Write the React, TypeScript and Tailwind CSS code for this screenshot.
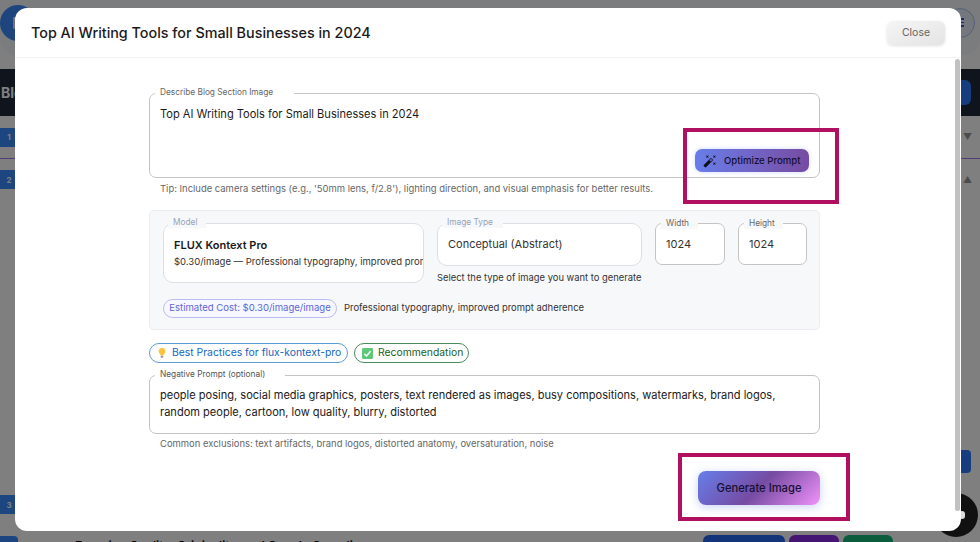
import React from 'react';
import { MdAutoFixHigh } from 'react-icons/md';

const Bulb = () => (
  <svg viewBox="0 0 12 14" className="h-[12px] w-[10px] shrink-0">
    <path d="M6 .8a4.2 4.2 0 0 0-2.4 7.6c.5.4.7.9.8 1.5h3.2c.1-.6.3-1.1.8-1.5A4.2 4.2 0 0 0 6 .8z" fill="#f9c23c" />
    <rect x="4.3" y="10.2" width="3.4" height="2.6" rx="1" fill="#9b9b9b" />
  </svg>
);

const Check = () => (
  <svg viewBox="0 0 12 12" className="h-[11px] w-[11px] shrink-0">
    <rect width="12" height="12" rx="1.5" fill="#5fc878" />
    <path d="M2.6 6.2l2.3 2.4 4.4-5" fill="none" stroke="#fff" strokeWidth="1.5" />
  </svg>
);

const Background = () => (
  <div className="flex h-full flex-col bg-white">
    <div className="flex h-[55px] shrink-0 items-center justify-between rounded-b-2xl bg-[#f6f8fc] pb-[10px] pr-[5px]">
      <div className="flex h-[36px] w-[36px] items-center justify-center rounded-full bg-[#3e8bff]">
        <div className="h-[12px] w-[10px] rounded-[1px] bg-[#dfe6f5]" />
      </div>
      <div className="flex h-[30px] w-[30px] flex-col items-center justify-center gap-[2px] rounded-full border border-[#a9bff0] bg-[#e8eefc]">
        <div className="h-[1.5px] w-[8px] bg-[#2c5fd0]" />
        <div className="h-[1.5px] w-[8px] bg-[#2c5fd0]" />
        <div className="h-[1.5px] w-[8px] bg-[#2c5fd0]" />
      </div>
    </div>
    <div className="mt-[14px] flex h-[47px] shrink-0 items-center justify-between bg-[#202838] pr-[9px] text-[14px] font-bold text-white">
      <span className="pl-[1px]">Blog</span>
      <div className="h-[25px] w-[28px] rounded-md bg-[#2f7bff]" />
    </div>
    <div className="flex h-[43px] shrink-0 items-center justify-between border-b border-[#a77bf0] pr-[8px]">
      <div className="flex h-[19px] w-[18px] items-center justify-center rounded-r bg-[#3a8bff] text-[8px] font-bold text-white">1</div>
      <span className="text-[9px] text-[#999]">▼</span>
    </div>
    <div className="flex h-[336px] shrink-0 items-start justify-between pr-[8px] pt-[11px]">
      <div className="flex h-[19px] w-[18px] items-center justify-center rounded-r bg-[#3a8bff] text-[8px] font-bold text-white">2</div>
      <span className="mt-[3px] text-[9px] text-[#999]">▲</span>
    </div>
    <div className="flex h-[41px] shrink-0 items-start">
      <div className="flex h-[19px] w-[18px] items-center justify-center rounded-r bg-[#3a8bff] text-[8px] font-bold text-white">3</div>
    </div>
    <div className="flex shrink-0 items-start gap-[57px]">
      <div className="h-[19px] w-[18px] rounded-r bg-[#3a8bff]" />
      <span className="mt-[3px] text-[12px] font-semibold leading-[14px] text-black">Ensuring Quality, Originality, and Google Compliance</span>
    </div>
  </div>
);

const App: React.FC = () => {
  return (
    <div className="relative h-[542px] w-[980px] overflow-hidden font-['Inter',sans-serif]">
      <Background />

      {/* bottom right bits behind the dialog */}
      <div className="absolute left-[703px] top-[535px] flex gap-[4px]">
        <div className="h-[20px] w-[82px] rounded-md bg-[#2468f0]" />
        <div className="h-[20px] w-[50px] rounded-md bg-[#8a2be8]" />
        <div className="h-[20px] w-[50px] rounded-md bg-[#14b87a]" />
      </div>
      <div className="absolute left-[961px] top-[450px] h-[23px] w-[10px] rounded-r bg-[#2f7bff]" />

      <div className="absolute inset-0 bg-black/50" />
      <div className="absolute left-[934px] top-[493px] h-[44px] w-[44px] rounded-full bg-[#111]" />
      <div className="absolute left-[959px] top-[511px] h-[8px] w-[6px] rounded-full bg-[#ddd]" />

      {/* dialog */}
      <div className="absolute left-[15px] top-[8px] flex h-[523px] w-[946px] flex-col overflow-hidden rounded-[12px] bg-white">
        <div className="flex h-[50px] shrink-0 items-center justify-between border-b border-[#f2f2f4] pl-[16px] pr-[16px]">
          <h2 className="text-[14.35px] font-medium text-[#1a1a1a]">Top AI Writing Tools for Small Businesses in 2024</h2>
          <button className="h-[24px] w-[58px] rounded-md bg-gradient-to-br from-[#f5f5f5] to-[#e4e4e4] text-[10.5px] text-[#666] shadow-[0_1px_3px_rgba(0,0,0,0.12)]">
            Close
          </button>
        </div>

        <div className="flex min-h-0 flex-1">
          <div className="flex-1 pr-[1px] pt-[35px]">
            <div className="mx-auto w-[671px]">
              <div className="relative h-[85px] rounded-[7px] border border-[#c4c4c4] pl-[10px] pt-[12px] text-[11.07px] leading-[16px] text-[#1a1a1a]">
                <span className="absolute left-[5px] top-[-8px] w-[139px] bg-white pl-[5px] text-[8.3px] leading-[12px] text-[#666]">Describe Blog Section Image</span>
                Top AI Writing Tools for Small Businesses in 2024
                <button className="absolute bottom-[5px] right-[10px] flex h-[23px] w-[114px] items-center gap-[7px] rounded-[7px] bg-gradient-to-r from-[#667eea] to-[#764ba2] pl-[8px] text-[9.6px] font-medium text-[#150f33] shadow-[0_0_4px_rgba(102,126,234,0.3)]">
                  <MdAutoFixHigh className="h-[14px] w-[14px] text-[#0f0f1a]" />
                  Optimize Prompt
                </button>
              </div>
              <p className="mt-[4px] pl-[11px] text-[9.45px] leading-[14px] text-[#666]">Tip: Include camera settings (e.g., '50mm lens, f/2.8'), lighting direction, and visual emphasis for better results.</p>

              <div className="mt-[14px] h-[120px] rounded-[5px] border border-[#eaecf0] bg-[#f7f8fa] pl-[13px] pt-[12px]">
                <div className="flex items-start">
                  <div className="relative h-[60px] w-[261px] shrink-0">
                    <div className="h-full overflow-hidden rounded-[10px] border border-[#dcdfe5] bg-white pl-[10px] pt-[14px]">
                      <div className="whitespace-nowrap text-[11px] font-semibold leading-[15px] text-[#1a1a1a]">FLUX Kontext Pro</div>
                      <div className="mt-[2px] whitespace-nowrap text-[9.5px] leading-[13px] text-[#333]">$0.30/image — Professional typography, improved prompt adherence</div>
                    </div>
                    <span className="absolute left-[5px] top-[-7px] w-[38px] bg-[#f7f8fa] pl-[5px] text-[8.3px] leading-[12px] text-[#98a2b8]">Model</span>
                  </div>
                  <div className="relative ml-[13px] w-[205px] shrink-0">
                    <div className="flex h-[43px] items-center rounded-[10px] border border-[#dcdfe5] bg-white pl-[10px] text-[11px] text-[#333]">Conceptual (Abstract)</div>
                    <span className="absolute left-[5px] top-[-7px] w-[61px] bg-[#f7f8fa] pl-[5px] text-[8.3px] leading-[12px] text-[#98a2b8]">Image Type</span>
                    <p className="mt-[6px] whitespace-nowrap text-[9.4px] leading-[12px] text-[#333]">Select the type of image you want to generate</p>
                  </div>
                  <div className="relative ml-[13px] flex h-[42px] w-[70px] shrink-0 items-center rounded-[7px] border border-[#c4c4c4] bg-white pl-[10px] text-[11px] text-[#333]">
                    <span className="absolute left-[5px] top-[-7px] w-[37px] bg-[#f7f8fa] pl-[5px] text-[8.3px] leading-[12px] text-[#666]">Width</span>
                    1024
                  </div>
                  <div className="relative ml-[13px] flex h-[42px] w-[69px] shrink-0 items-center rounded-[7px] border border-[#c4c4c4] bg-white pl-[10px] text-[11px] text-[#333]">
                    <span className="absolute left-[5px] top-[-7px] w-[39px] bg-[#f7f8fa] pl-[5px] text-[8.3px] leading-[12px] text-[#666]">Height</span>
                    1024
                  </div>
                </div>
                <div className="mt-[15px] flex items-center gap-[7px]">
                  <span className="flex h-[19px] w-[174px] items-center justify-center rounded-full border border-[#b9bdf3] bg-[#f7f7fe] text-[9.55px] text-[#5a67d8]">Estimated Cost: $0.30/image/image</span>
                  <span className="text-[9.45px] text-[#333]">Professional typography, improved prompt adherence</span>
                </div>
              </div>

              <div className="mt-[13px] flex items-center gap-[6px]">
                <span className="flex h-[20px] w-[199px] items-center gap-[5px] rounded-full border border-[#5b9bd5] pl-[7px] text-[10.37px] text-[#1565c0]">
                  <Bulb />
                  Best Practices for flux-kontext-pro
                </span>
                <span className="flex h-[20px] w-[115px] items-center gap-[5px] rounded-full border border-[#4a8a5c] pl-[7px] text-[10.35px] text-[#1b5e20]">
                  <Check />
                  Recommendation
                </span>
              </div>

              <div className="relative mt-[12px] h-[59px] rounded-[7px] border border-[#c4c4c4] pl-[10px] pr-[10px] pt-[11px] text-[11.06px] leading-[17px] text-[#1a1a1a]">
                <span className="absolute left-[5px] top-[-8px] w-[130px] bg-white pl-[5px] text-[8.3px] leading-[12px] text-[#555]">Negative Prompt (optional)</span>
                people posing, social media graphics, posters, text rendered as images, busy compositions, watermarks, brand logos, random people, cartoon, low quality, blurry, distorted
              </div>
              <p className="mt-[3px] pl-[11px] text-[9.45px] leading-[14px] text-[#666]">Common exclusions: text artifacts, brand logos, distorted anatomy, oversaturation, noise</p>

              <div className="mt-[20px] flex justify-end">
                <button className="h-[34px] w-[122px] rounded-[8px] bg-[linear-gradient(135deg,#667eea_0%,#764ba2_50%,#f093fb_100%)] text-[11.2px] font-medium text-[#150f33] shadow-[0_2px_10px_rgba(102,126,234,0.35)]">
                  Generate Image
                </button>
              </div>
            </div>
          </div>
          <div className="mr-[1px] mt-[1px] h-[452px] w-[5px] shrink-0 rounded-full bg-[#c1c1c1]" />
        </div>

        {/* annotation boxes */}
        <div className="absolute left-[668px] top-[120px] h-[76px] w-[156px] border-[4px] border-[#b0105f]" />
        <div className="absolute left-[663px] top-[445px] h-[68px] w-[172px] border-[4px] border-[#b0105f]" />
      </div>
    </div>
  );
};

export default App;
